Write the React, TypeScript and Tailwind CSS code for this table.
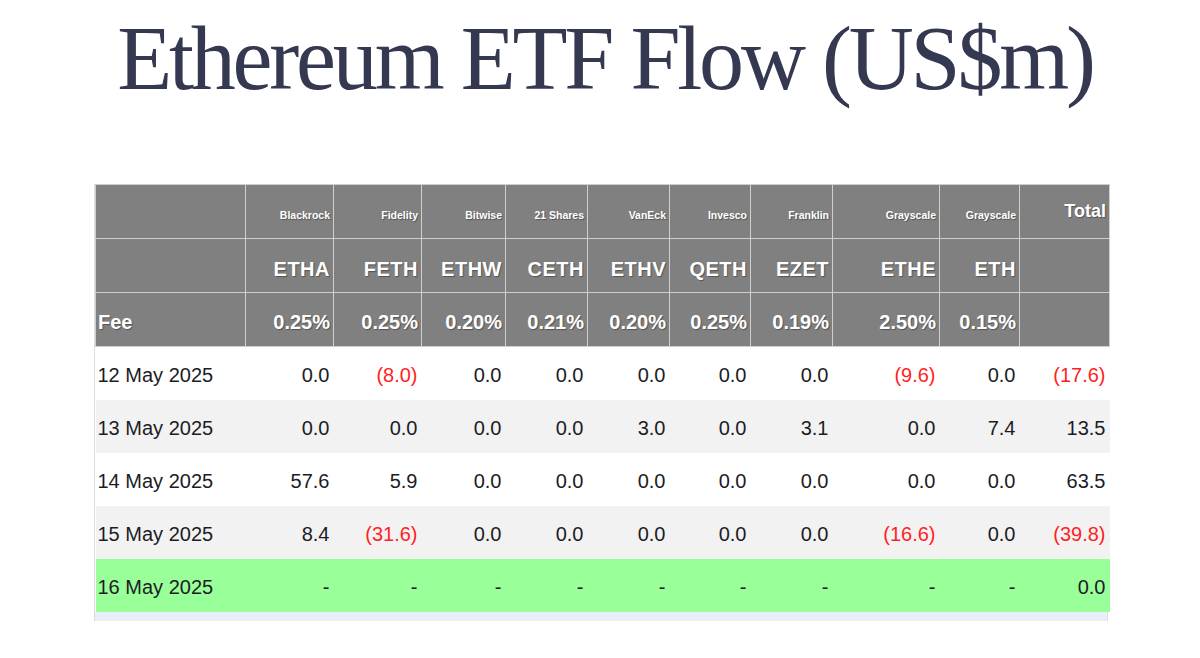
import React from 'react'

const funds = [
  { issuer: 'Blackrock', ticker: 'ETHA', fee: '0.25%', w: 'w-[88px]' },
  { issuer: 'Fidelity', ticker: 'FETH', fee: '0.25%', w: 'w-[88px]' },
  { issuer: 'Bitwise', ticker: 'ETHW', fee: '0.20%', w: 'w-[84px]' },
  { issuer: '21 Shares', ticker: 'CETH', fee: '0.21%', w: 'w-[82px]' },
  { issuer: 'VanEck', ticker: 'ETHV', fee: '0.20%', w: 'w-[82px]' },
  { issuer: 'Invesco', ticker: 'QETH', fee: '0.25%', w: 'w-[81px]' },
  { issuer: 'Franklin', ticker: 'EZET', fee: '0.19%', w: 'w-[82px]' },
  { issuer: 'Grayscale', ticker: 'ETHE', fee: '2.50%', w: 'w-[107px]' },
  { issuer: 'Grayscale', ticker: 'ETH', fee: '0.15%', w: 'w-[80px]' },
]

const rows = [
  { date: '12 May 2025', values: ['0.0', '(8.0)', '0.0', '0.0', '0.0', '0.0', '0.0', '(9.6)', '0.0'], total: '(17.6)', bg: 'bg-white' },
  { date: '13 May 2025', values: ['0.0', '0.0', '0.0', '0.0', '3.0', '0.0', '3.1', '0.0', '7.4'], total: '13.5', bg: 'bg-[#f2f2f2]' },
  { date: '14 May 2025', values: ['57.6', '5.9', '0.0', '0.0', '0.0', '0.0', '0.0', '0.0', '0.0'], total: '63.5', bg: 'bg-white' },
  { date: '15 May 2025', values: ['8.4', '(31.6)', '0.0', '0.0', '0.0', '0.0', '0.0', '(16.6)', '0.0'], total: '(39.8)', bg: 'bg-[#f2f2f2]' },
  { date: '16 May 2025', values: ['-', '-', '-', '-', '-', '-', '-', '-', '-'], total: '0.0', bg: 'bg-[#99ff99]' },
]

// shared look of the grey header cells (alignment added per cell)
const head = 'bg-[#808080] border border-[#cfcfcf] text-white font-bold align-middle [text-shadow:1px_1px_1px_rgba(0,0,0,0.35)]'
const headR = `${head} text-right pr-[3px]`

function Cell({ value }: { value: string }) {
  const neg = value.startsWith('(')
  return (
    <td className={`text-right align-middle pr-[4px] pt-[4px] ${neg ? 'text-[#ff1f1f]' : 'text-[#1c1c24]'}`}>
      {value}
    </td>
  )
}

export default function App() {
  return (
    <div className="w-[1200px] h-[658px] bg-white font-['Liberation_Sans',Arial,sans-serif] overflow-hidden">
      <h1 className="pt-[14px] pl-[10px] text-center text-[90px] leading-none tracking-[-3.2px] text-[#343850] font-['Liberation_Serif','Times_New_Roman',serif]">
        Ethereum ETF Flow (US$m)
      </h1>

      <div className="ml-[94px] mt-[80px] w-[1014px] border-x border-[#dcdcdc]">
        <table className="w-full table-fixed border-collapse text-[20px]">
          <colgroup>
            <col className="w-[150px]" />
            {funds.map((f, i) => (
              <col key={i} className={f.w} />
            ))}
            <col className="w-[90px]" />
          </colgroup>
          <thead>
            <tr className="h-[54px]">
              <th className={headR}></th>
              {funds.map((f, i) => (
                <th key={i} className={`${headR} text-[10.5px] pt-[9px]`}>
                  {f.issuer}
                </th>
              ))}
              <th className={`${headR} text-[18px]`}>Total</th>
            </tr>
            <tr className="h-[54px]">
              <th className={headR}></th>
              {funds.map((f, i) => (
                <th key={i} className={`${headR} pt-[7px] tracking-[0.5px]`}>
                  {f.ticker}
                </th>
              ))}
              <th className={headR}></th>
            </tr>
            <tr className="h-[54px]">
              <th className={`${head} text-left pl-[2px] pt-[4px]`}>Fee</th>
              {funds.map((f, i) => (
                <th key={i} className={`${headR} pt-[4px]`}>
                  {f.fee}
                </th>
              ))}
              <th className={headR}></th>
            </tr>
          </thead>
          <tbody>
            {rows.map((r) => (
              <tr key={r.date} className={`h-[53px] ${r.bg}`}>
                <td className="text-left align-middle pl-[2px] pt-[4px] text-[#1c1c24]">{r.date}</td>
                {r.values.map((v, i) => (
                  <Cell key={i} value={v} />
                ))}
                <Cell value={r.total} />
              </tr>
            ))}
          </tbody>
        </table>
        <div className="h-[9px] bg-[#e9eff8]" />
      </div>
    </div>
  )
}
